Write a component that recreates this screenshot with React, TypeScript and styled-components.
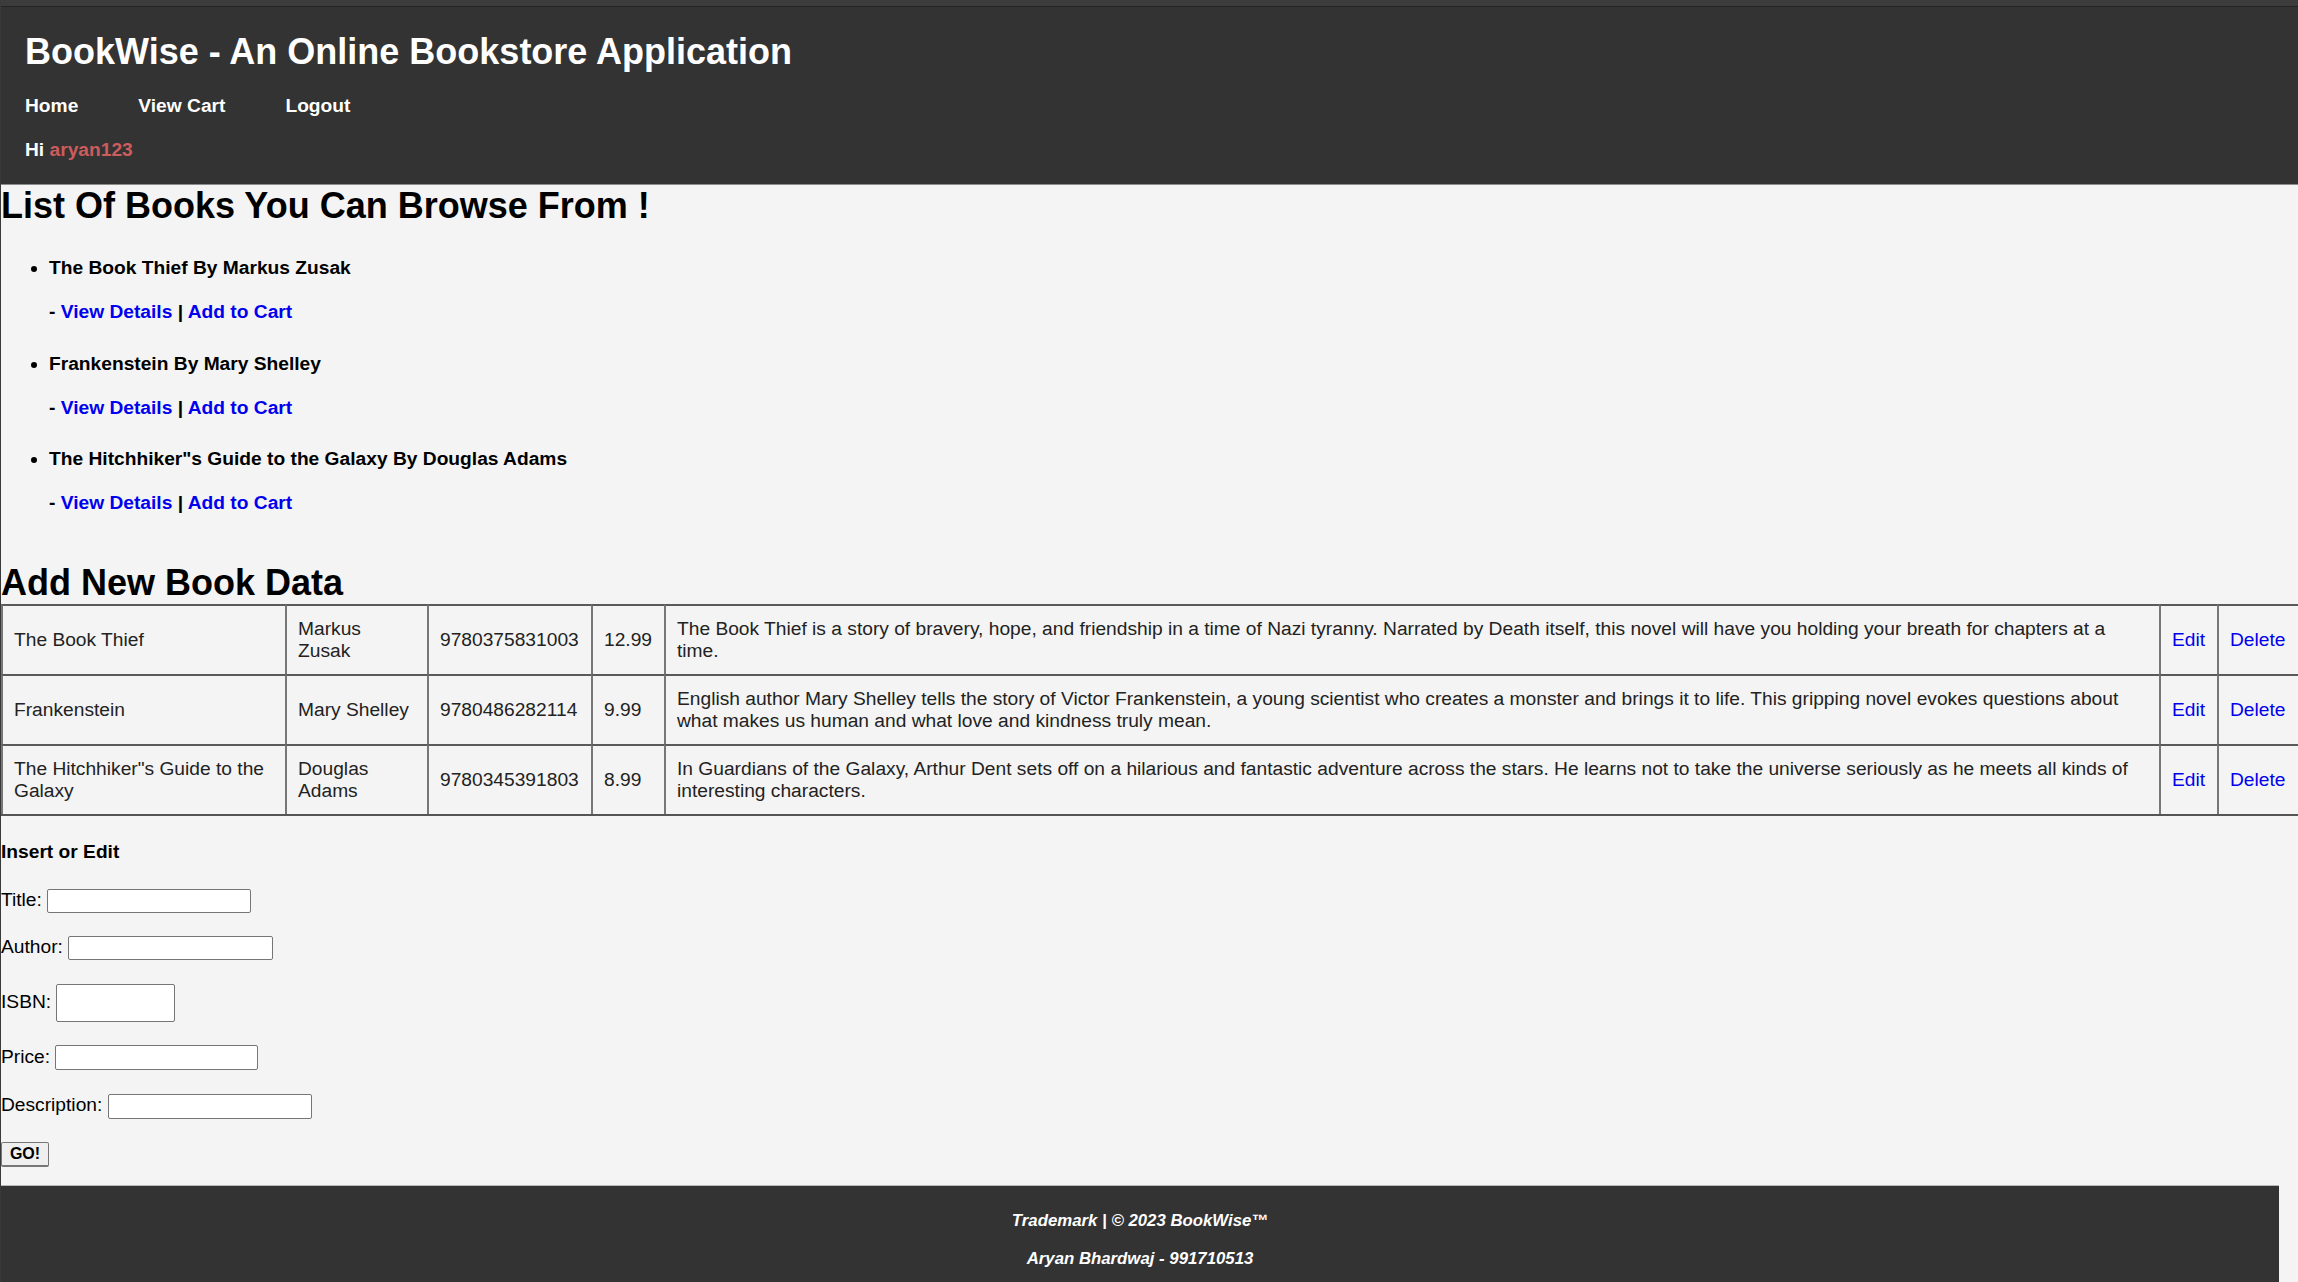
import React from "react";
import styled, { createGlobalStyle } from "styled-components";

const GlobalStyle = createGlobalStyle`
  html, body {
    margin: 0;
    padding: 0;
    overflow: hidden;
    background: #f4f4f4;
  }
  body {
    font-family: "Liberation Sans", Arial, Helvetica, sans-serif;
    font-size: 19.2px;
    color: #000;
  }
`;

const Page = styled.div`
  min-height: 1282px;
  border-left: 1px solid #3a3a3a;
  overflow: hidden;
`;

const TopStrip = styled.div`
  height: 6px;
  background: #3c3c3c;
`;

const Header = styled.header`
  background: #333333;
  border-top: 1px solid #242424;
  border-bottom: 1px solid #8c8c8c;
  padding: 0 24px 23px;
  color: #fff;
`;

const AppTitle = styled.h1`
  margin: 23.5px 0 0;
  font-size: 36px;
  line-height: 42px;
  font-weight: 700;
`;

const Nav = styled.nav`
  display: flex;
  gap: 60px;
  margin-top: 22.5px;
  line-height: 22px;
`;

const NavLink = styled.a`
  color: #fff;
  font-weight: 700;
  text-decoration: none;
`;

const Greeting = styled.div`
  margin-top: 22px;
  line-height: 22px;
  font-weight: 700;
`;

const UserName = styled.span`
  color: #cd5c5c;
`;

const Main = styled.main`
  padding: 0;
`;

const SectionTitle = styled.h2<{ $top?: number }>`
  margin: ${(p) => p.$top ?? 0}px 0 0;
  font-size: 36px;
  line-height: 42px;
  font-weight: 700;
`;

const BookList = styled.ul`
  margin: 30px 0 0;
  padding-left: 48px;
  list-style: disc;
`;

const BookItem = styled.li`
  line-height: 22px;
  font-weight: 700;
  margin-bottom: 29.5px;
`;

const BookActions = styled.div`
  margin-top: 22px;
`;

const Link = styled.a<{ $bold?: boolean }>`
  color: #0000ee;
  font-weight: ${(p) => (p.$bold ? 700 : 400)};
  text-decoration: none;
`;

const Table = styled.table`
  table-layout: fixed;
  width: 2300px;
  border-collapse: separate;
  border-spacing: 0;
  border-bottom: 2px solid #555;
`;

const Cell = styled.td<{ $padRight?: number }>`
  border-top: 2px solid #5a5a5a;
  border-left: 2px solid #777;
  padding: 12px ${(p) => p.$padRight ?? 11}px 12px 11px;
  line-height: 22px;
  color: #222;
  vertical-align: middle;
`;

const FormTitle = styled.div`
  margin-top: 25px;
  line-height: 22px;
  font-weight: 700;
`;

const Form = styled.form`
  display: flex;
  flex-direction: column;
  gap: 23.5px;
  margin-top: 26px;
`;

const FormRow = styled.label`
  display: flex;
  align-items: center;
  gap: 5.3px;
`;

const FieldLabel = styled.span`
  line-height: 22px;
  padding-bottom: 2px;
`;

const Input = styled.input<{ $w?: number; $h?: number }>`
  box-sizing: border-box;
  width: ${(p) => p.$w ?? 204}px;
  height: ${(p) => p.$h ?? 24}px;
  margin: 0;
  padding: 1px 2px;
  background: #fff;
  border: 1px solid #767676;
  border-bottom-width: 1.5px;
  border-radius: 2px;
  font-family: inherit;
  font-size: 16px;
`;

const GoButton = styled.button`
  align-self: flex-start;
  box-sizing: border-box;
  width: 48px;
  height: 25px;
  margin: 0;
  padding: 0;
  background: #efefef;
  border: 1px solid #767676;
  border-bottom-width: 2px;
  border-radius: 2px;
  font-family: inherit;
  font-size: 16px;
  font-weight: 700;
  color: #000;
`;

const Footer = styled.footer`
  margin: 18px 19px 0 0;
  background: #333333;
  border-top: 1px solid #b8b8b8;
  padding: 25px 0 40px;
  color: #fff;
  text-align: center;
  font-size: 16.8px;
  font-weight: 700;
  font-style: italic;
  display: flex;
  flex-direction: column;
  gap: 18px;
`;

const FooterLine = styled.div`
  line-height: 20px;
`;

const books = [
  {
    title: "The Book Thief",
    author: "Markus Zusak",
    isbn: "9780375831003",
    price: "12.99",
    description:
      "The Book Thief is a story of bravery, hope, and friendship in a time of Nazi tyranny. Narrated by Death itself, this novel will have you holding your breath for chapters at a time.",
  },
  {
    title: "Frankenstein",
    author: "Mary Shelley",
    isbn: "9780486282114",
    price: "9.99",
    description:
      "English author Mary Shelley tells the story of Victor Frankenstein, a young scientist who creates a monster and brings it to life. This gripping novel evokes questions about what makes us human and what love and kindness truly mean.",
  },
  {
    title: 'The Hitchhiker"s Guide to the Galaxy',
    author: "Douglas Adams",
    isbn: "9780345391803",
    price: "8.99",
    description:
      "In Guardians of the Galaxy, Arthur Dent sets off on a hilarious and fantastic adventure across the stars. He learns not to take the universe seriously as he meets all kinds of interesting characters.",
  },
];

const colWidths = [284, 142, 164, 73, 1495, 58, 84];

export default function App() {
  return (
    <>
      <GlobalStyle />
      <Page>
        <TopStrip />
        <Header>
          <AppTitle>BookWise - An Online Bookstore Application</AppTitle>
          <Nav>
            <NavLink href="#">Home</NavLink>
            <NavLink href="#">View Cart</NavLink>
            <NavLink href="#">Logout</NavLink>
          </Nav>
          <Greeting>
            Hi <UserName>aryan123</UserName>
          </Greeting>
        </Header>
        <Main>
          <SectionTitle>List Of Books You Can Browse From !</SectionTitle>
          <BookList>
            {books.map((b) => (
              <BookItem key={b.isbn}>
                {b.title} By {b.author}
                <BookActions>
                  - <Link $bold href="#">View Details</Link> |{" "}
                  <Link $bold href="#">Add to Cart</Link>
                </BookActions>
              </BookItem>
            ))}
          </BookList>
          <SectionTitle $top={47.5}>Add New Book Data</SectionTitle>
          <Table>
            <colgroup>
              {colWidths.map((w, i) => (
                <col key={i} style={{ width: w }} />
              ))}
            </colgroup>
            <tbody>
              {books.map((b) => (
                <tr key={b.isbn}>
                  <Cell>{b.title}</Cell>
                  <Cell>{b.author}</Cell>
                  <Cell>{b.isbn}</Cell>
                  <Cell>{b.price}</Cell>
                  <Cell $padRight={13}>{b.description}</Cell>
                  <Cell>
                    <Link href="#">Edit</Link>
                  </Cell>
                  <Cell>
                    <Link href="#">Delete</Link>
                  </Cell>
                </tr>
              ))}
            </tbody>
          </Table>
          <FormTitle>Insert or Edit</FormTitle>
          <Form onSubmit={(e) => e.preventDefault()}>
            <FormRow>
              <FieldLabel>Title:</FieldLabel>
              <Input type="text" />
            </FormRow>
            <FormRow>
              <FieldLabel>Author:</FieldLabel>
              <Input type="text" $w={205} />
            </FormRow>
            <FormRow>
              <FieldLabel>ISBN:</FieldLabel>
              <Input type="text" $w={119} $h={38} />
            </FormRow>
            <FormRow>
              <FieldLabel>Price:</FieldLabel>
              <Input type="text" $w={203} $h={25} />
            </FormRow>
            <FormRow>
              <FieldLabel>Description:</FieldLabel>
              <Input type="text" $w={204} $h={25} />
            </FormRow>
            <GoButton type="submit">GO!</GoButton>
          </Form>
        </Main>
        <Footer>
          <FooterLine>Trademark | © 2023 BookWise™</FooterLine>
          <FooterLine>Aryan Bhardwaj - 991710513</FooterLine>
        </Footer>
      </Page>
    </>
  );
}
